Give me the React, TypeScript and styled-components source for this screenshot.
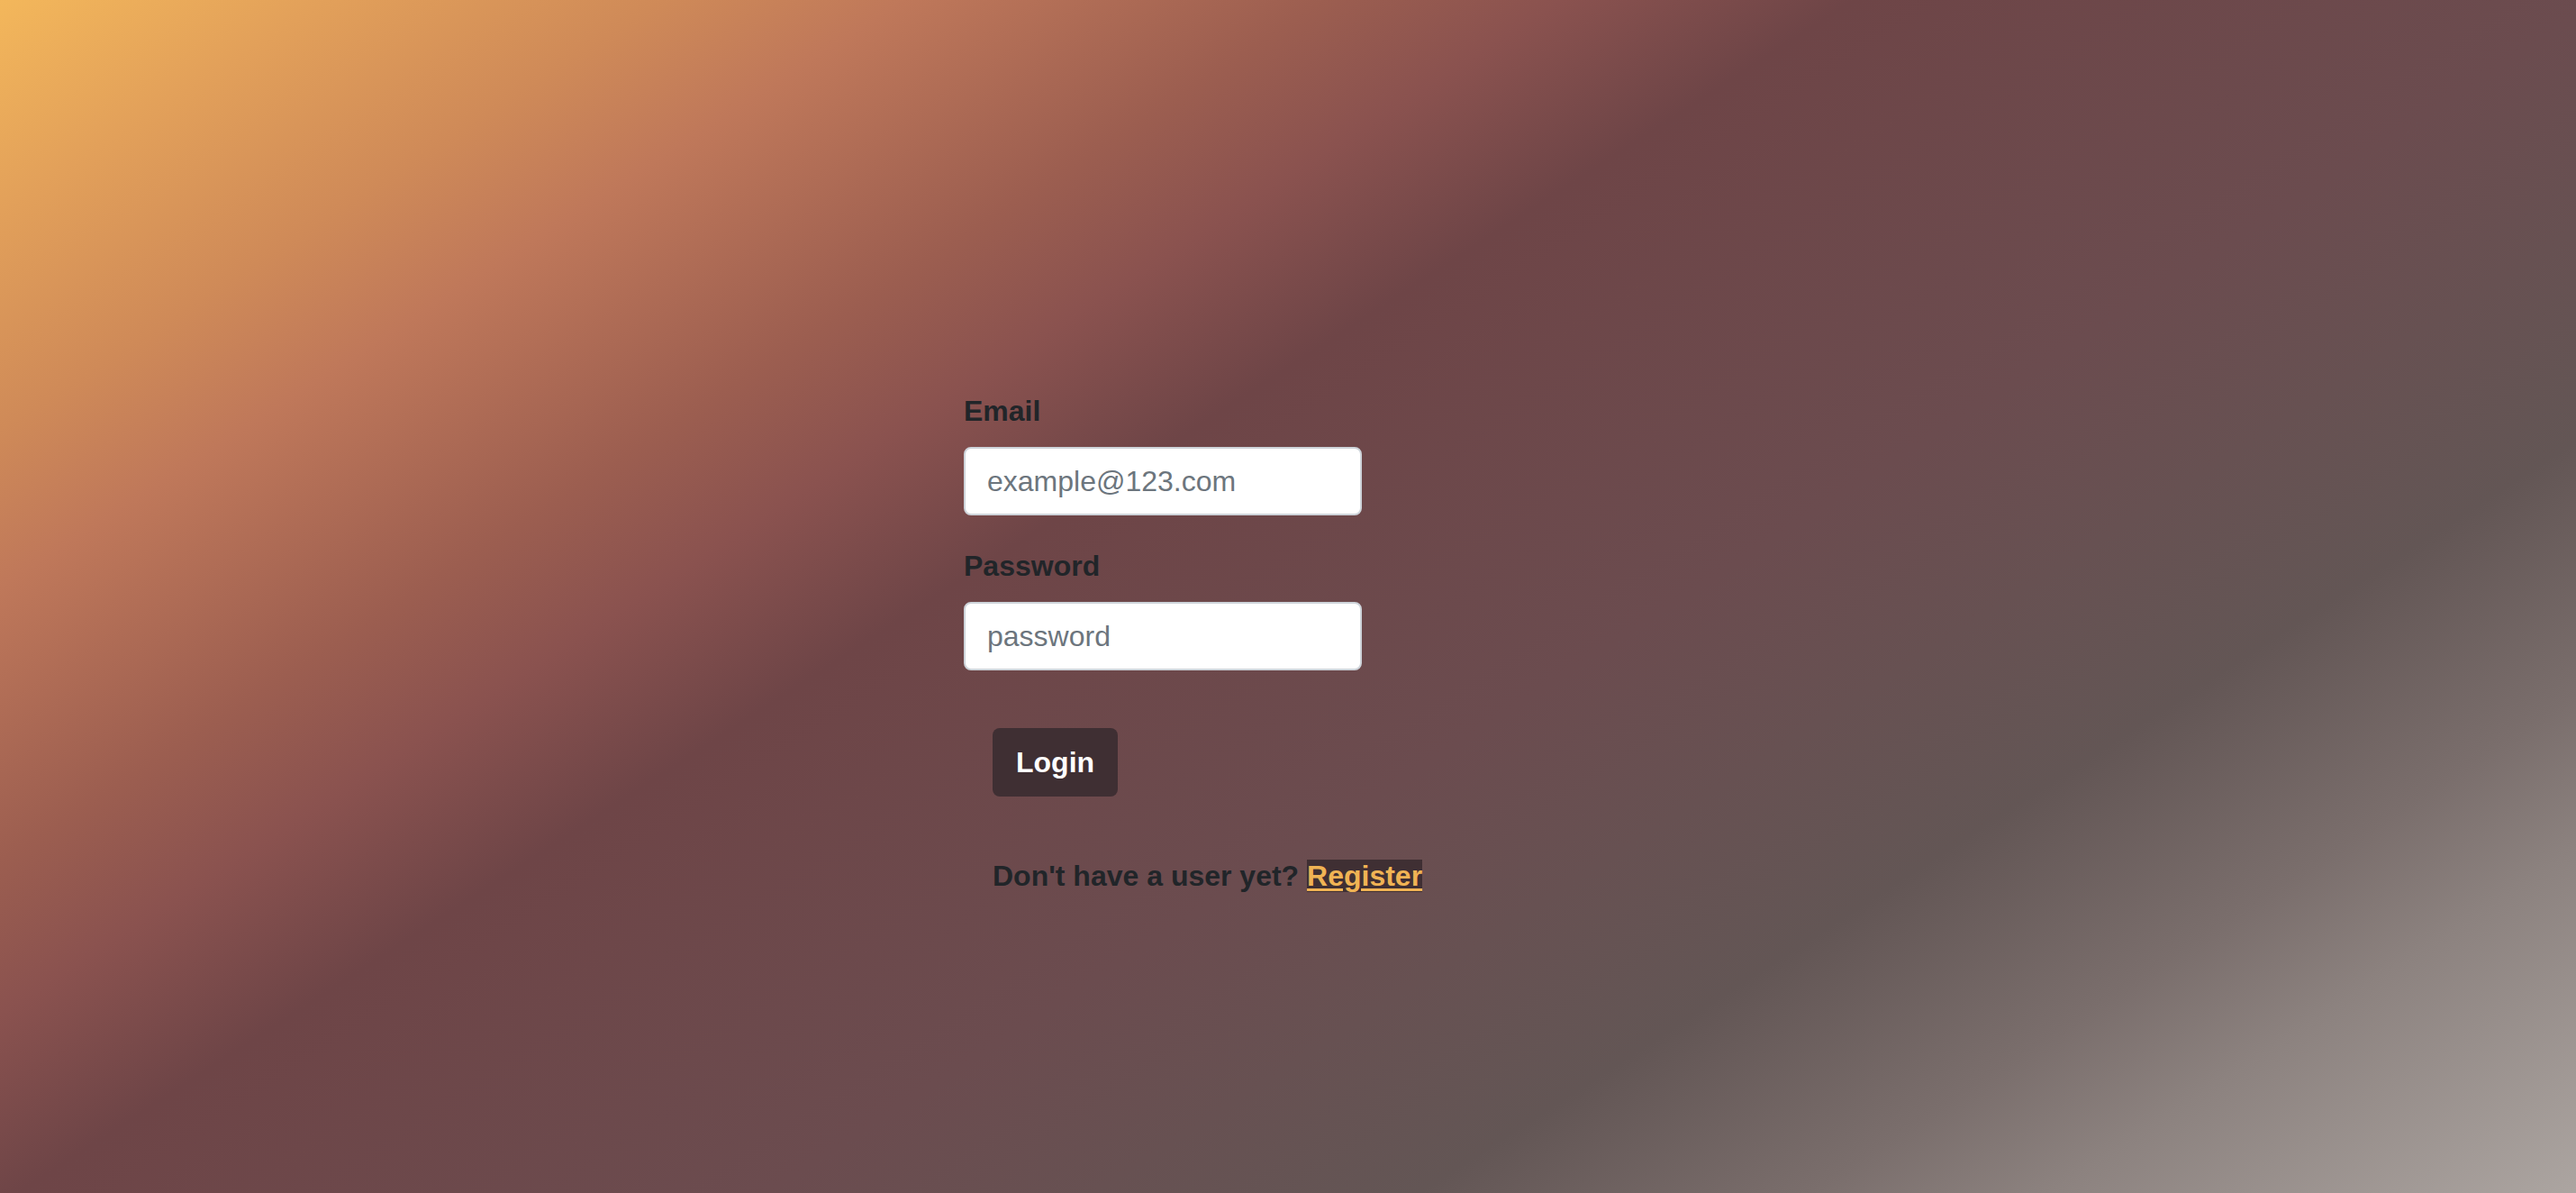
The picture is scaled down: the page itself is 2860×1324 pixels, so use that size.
import React from "react";
import styled, { createGlobalStyle } from "styled-components";

const GlobalStyle = createGlobalStyle`
  html, body {
    margin: 0;
    padding: 0;
  }
  body {
    font-family: "Liberation Sans", Arial, Helvetica, sans-serif;
    color: #212529;
  }
  * { box-sizing: border-box; }
`;

const Page = styled.main`
  min-height: 100vh;
  width: 100%;
  background: linear-gradient(
    147deg,
    #f3b75b 0%,
    #e2a05a 7.4%,
    #cf8a58 15%,
    #bf785a 20.5%,
    #9c5e50 30%,
    #8a524f 35.4%,
    #6e4547 42%,
    #6b4c4f 59%,
    #635655 73.8%,
    #7a6e6c 82.6%,
    #8c827f 88%,
    #aca5a1 100%
  );
  display: flex;
  justify-content: center;
  padding-top: 432px;
`;

const Column = styled.div`
  width: 720px;
`;

const Form = styled.form`
  display: flex;
  flex-direction: column;
  align-items: flex-start;
`;

const Group = styled.div`
  display: flex;
  flex-direction: column;
  margin-bottom: 32px;
`;

const Label = styled.label`
  display: block;
  font-size: 32px;
  line-height: 48px;
  font-weight: 700;
  color: #212529;
  margin-bottom: 16px;
`;

const Input = styled.input`
  width: 442px;
  height: 76px;
  padding: 12px 24px;
  font-family: "Liberation Sans", Arial, sans-serif;
  font-size: 32px;
  line-height: 48px;
  color: #495057;
  background: #ffffff;
  border: 2px solid #ced4da;
  border-radius: 8px;
  outline: none;
  &::placeholder {
    color: #6c757d;
    opacity: 1;
  }
`;

const Button = styled.button`
  margin: 32px 0 0 32px;
  padding: 12px 24px;
  font-family: "Liberation Sans", Arial, sans-serif;
  font-size: 32px;
  line-height: 48px;
  font-weight: 700;
  color: #ffffff;
  background: #3f2f33;
  border: 2px solid transparent;
  border-radius: 8px;
  cursor: pointer;
`;

const Prompt = styled.p`
  margin: 64px 0 0 32px;
  font-size: 32px;
  line-height: 48px;
  font-weight: 700;
  color: #212529;
`;

const RegisterLink = styled.a`
  color: #f0b354;
  background: #3f2f33;
  text-decoration: underline;
  text-decoration-thickness: 3px;
  text-underline-offset: 3px;
`;

export default function App() {
  return (
    <>
      <GlobalStyle />
      <Page>
        <Column>
          <Form onSubmit={(e) => e.preventDefault()}>
            <Group>
              <Label htmlFor="email">Email</Label>
              <Input id="email" type="email" placeholder="example@123.com" />
            </Group>
            <Group>
              <Label htmlFor="password">Password</Label>
              <Input id="password" type="password" placeholder="password" />
            </Group>
          </Form>
          <Button type="button">Login</Button>
          <Prompt>
            Don't have a user yet? <RegisterLink href="#">Register</RegisterLink>
          </Prompt>
        </Column>
      </Page>
    </>
  );
}
